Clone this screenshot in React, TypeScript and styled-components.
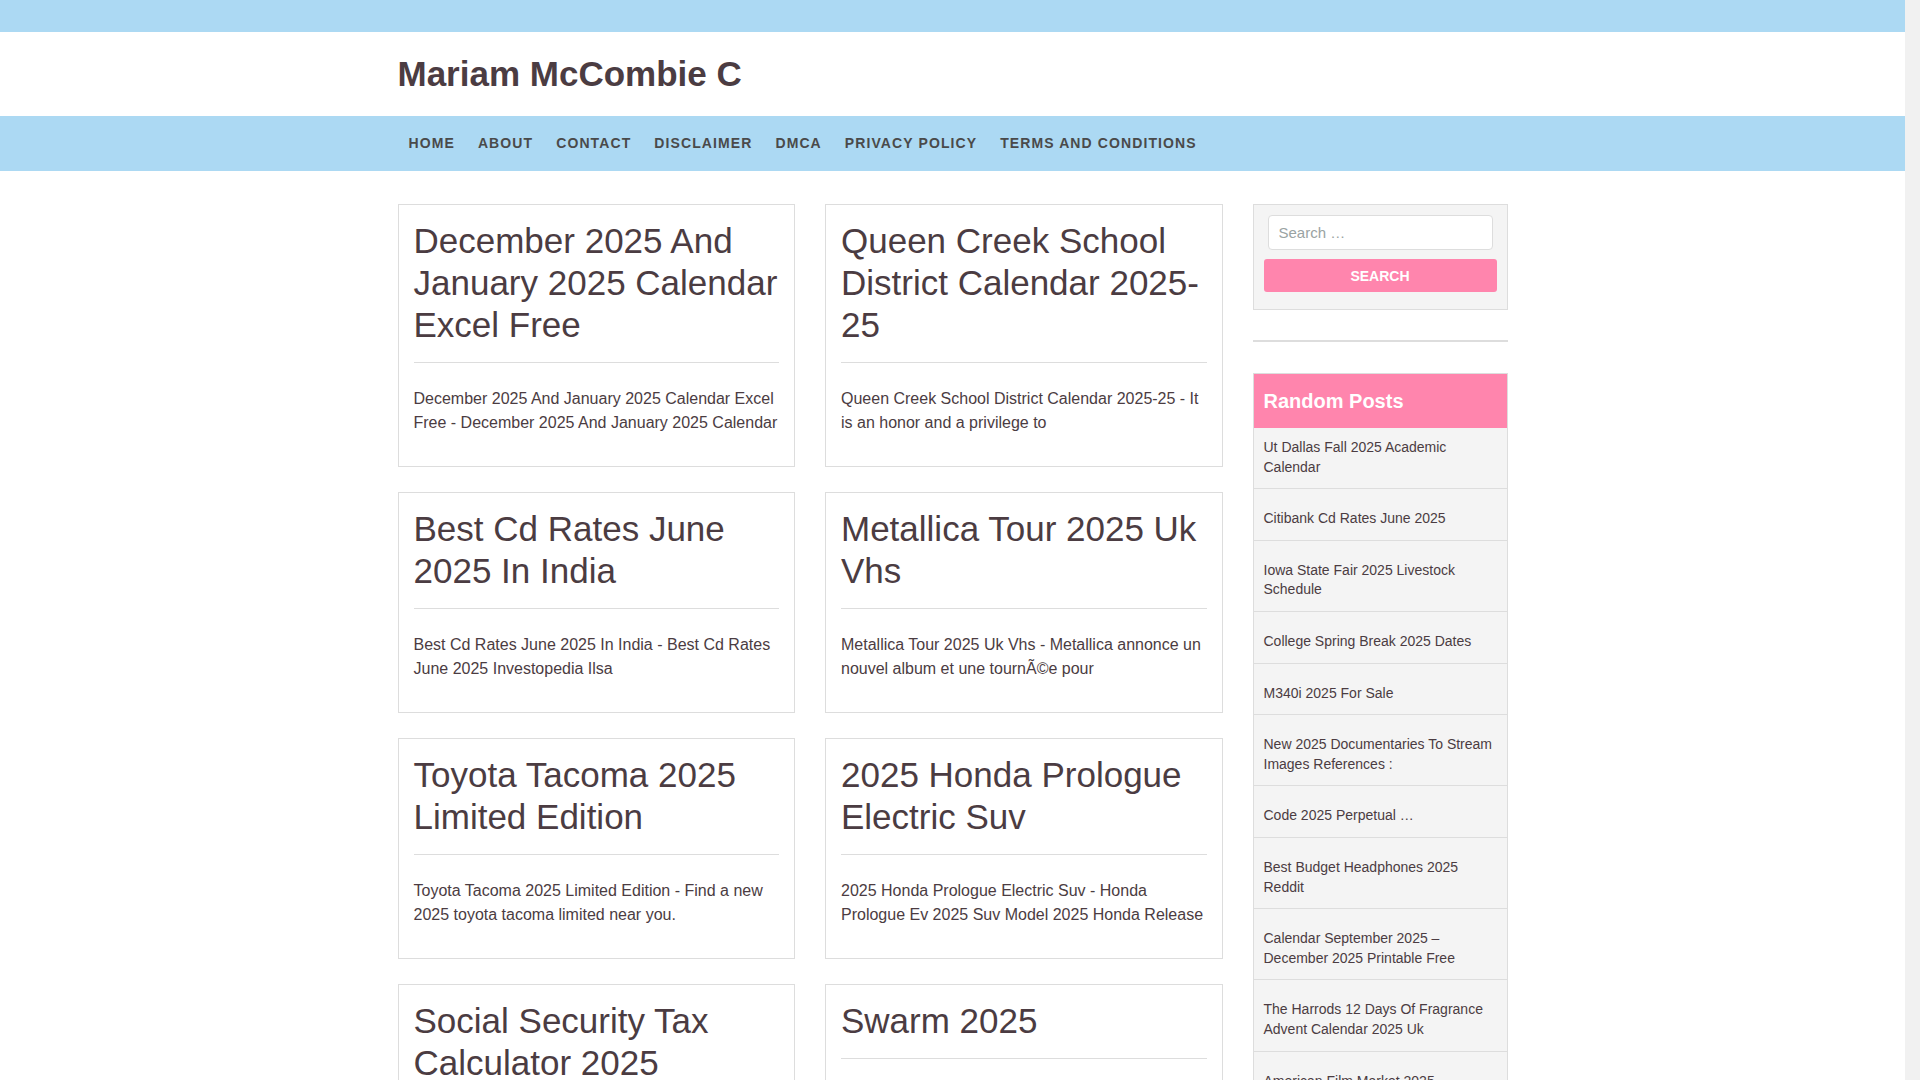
import styled, { createGlobalStyle } from 'styled-components';

const GlobalStyle = createGlobalStyle`
  html {
    background: #f1f1f1;
  }

  body {
    margin: 0 15px 0 0;
    background: #ffffff;
    color: #4b3c42;
    font-family: 'Liberation Sans', Arial, sans-serif;
  }

  * {
    box-sizing: border-box;
  }
`;

const skyBlue = '#acd9f3';
const pink = '#ff85ad';
const line = '#dddddd';
const panel = '#f4f4f4';

const TopBar = styled.div`
  height: 32px;
  background: ${skyBlue};
`;

const Container = styled.div`
  width: 1140px;
  margin: 0 auto;
  padding: 0 15px;
`;

const Header = styled.header`
  height: 84px;
  display: flex;
  align-items: center;
`;

const SiteTitle = styled.a`
  font-size: 35px;
  font-weight: 700;
  color: #4b3c42;
  text-decoration: none;
`;

const NavBar = styled.nav`
  background: ${skyBlue};
`;

const NavList = styled.ul`
  display: flex;
  margin: 0;
  padding: 0;
  list-style: none;
`;

const NavItem = styled.li`
  padding: 0 12px 0 11px;
  line-height: 55px;
  font-size: 14px;
  font-weight: 700;
  letter-spacing: 1.1px;
  text-transform: uppercase;
  color: #4a4a4a;
`;

const Layout = styled.div`
  display: grid;
  grid-template-columns: 825px 255px;
  column-gap: 30px;
  align-items: start;
  padding-top: 33px;
`;

const PostGrid = styled.main`
  display: grid;
  grid-template-columns: 1fr 1fr;
  column-gap: 30px;
  row-gap: 25px;
  align-items: start;
`;

const Card = styled.article`
  border: 1px solid ${line};
  padding: 15px;
`;

const CardTitle = styled.h2`
  margin: 0;
  font-size: 35px;
  line-height: 42px;
  font-weight: 400;
  color: #4b3c42;
`;

const Rule = styled.hr`
  margin: 16px 0 24px;
  border: 0;
  border-top: 1px solid ${line};
`;

const Excerpt = styled.p`
  margin: 0 0 16px;
  font-size: 16px;
  line-height: 24px;
  color: #4b3c42;
`;

const Sidebar = styled.aside`
  display: flex;
  flex-direction: column;
`;

const SearchBox = styled.form`
  display: flex;
  flex-direction: column;
  gap: 9px;
  padding: 10px 10px 17px;
  border: 1px solid ${line};
  background: ${panel};
`;

const SearchInput = styled.input`
  height: 35px;
  margin: 0 4px;
  padding: 0 10px;
  border: 1px solid ${line};
  border-radius: 4px;
  background: #ffffff;
  font-family: inherit;
  font-size: 15px;
  color: #4b3c42;

  &::placeholder {
    color: #9aa3a3;
  }
`;

const SearchButton = styled.button`
  height: 33px;
  border: 0;
  border-radius: 3px;
  background: ${pink};
  color: #ffffff;
  font-family: inherit;
  font-size: 14px;
  font-weight: 700;
  text-transform: uppercase;
`;

const Divider = styled.div`
  height: 2px;
  margin: 30px 0 31px;
  background: ${line};
`;

const Widget = styled.section`
  border: 1px solid ${line};
  background: ${panel};
`;

const WidgetTitle = styled.h3`
  margin: 0;
  height: 54px;
  padding: 0 10px;
  display: flex;
  align-items: center;
  background: ${pink};
  color: #ffffff;
  font-size: 20px;
  font-weight: 700;
`;

const PostList = styled.ul`
  margin: 0;
  padding: 0;
  list-style: none;
`;

const PostLink = styled.li`
  padding: 20px 10px 11px;
  border-bottom: 1px solid ${line};
  font-size: 14px;
  line-height: 19.6px;
  color: #4b3c42;

  &:first-child {
    padding-top: 10px;
  }
`;

const navLinks = ['Home', 'About', 'Contact', 'Disclaimer', 'DMCA', 'Privacy Policy', 'Terms and Conditions'];

const posts = [
  {
    title: 'December 2025 And January 2025 Calendar Excel Free',
    excerpt: 'December 2025 And January 2025 Calendar Excel Free - December 2025 And January 2025 Calendar',
  },
  {
    title: 'Queen Creek School District Calendar 2025-25',
    excerpt: 'Queen Creek School District Calendar 2025-25 - It is an honor and a privilege to',
  },
  {
    title: 'Best Cd Rates June 2025 In India',
    excerpt: 'Best Cd Rates June 2025 In India - Best Cd Rates June 2025 Investopedia Ilsa',
  },
  {
    title: 'Metallica Tour 2025 Uk Vhs',
    excerpt: 'Metallica Tour 2025 Uk Vhs - Metallica annonce un nouvel album et une tournÃ©e pour',
  },
  {
    title: 'Toyota Tacoma 2025 Limited Edition',
    excerpt: 'Toyota Tacoma 2025 Limited Edition - Find a new 2025 toyota tacoma limited near you.',
  },
  {
    title: '2025 Honda Prologue Electric Suv',
    excerpt: '2025 Honda Prologue Electric Suv - Honda Prologue Ev 2025 Suv Model 2025 Honda Release',
  },
  {
    title: 'Social Security Tax Calculator 2025',
    excerpt: 'Social Security Tax Calculator 2025 - Calculate your social security tax for the year',
  },
  {
    title: 'Swarm 2025',
    excerpt: 'Swarm 2025 - Watch the official trailer and release date details',
  },
];

const randomPosts = [
  'Ut Dallas Fall 2025 Academic Calendar',
  'Citibank Cd Rates June 2025',
  'Iowa State Fair 2025 Livestock Schedule',
  'College Spring Break 2025 Dates',
  'M340i 2025 For Sale',
  'New 2025 Documentaries To Stream Images References :',
  'Code 2025 Perpetual …',
  'Best Budget Headphones 2025 Reddit',
  'Calendar September 2025 – December 2025 Printable Free',
  'The Harrods 12 Days Of Fragrance Advent Calendar 2025 Uk',
  'American Film Market 2025',
];

export default function App() {
  return (
    <>
      <GlobalStyle />
      <TopBar />
      <Container>
        <Header>
          <SiteTitle href="#">Mariam McCombie C</SiteTitle>
        </Header>
      </Container>
      <NavBar>
        <Container>
          <NavList>
            {navLinks.map((link) => (
              <NavItem key={link}>{link}</NavItem>
            ))}
          </NavList>
        </Container>
      </NavBar>
      <Container>
        <Layout>
          <PostGrid>
            {posts.map((post) => (
              <Card key={post.title}>
                <CardTitle>{post.title}</CardTitle>
                <Rule />
                <Excerpt>{post.excerpt}</Excerpt>
              </Card>
            ))}
          </PostGrid>
          <Sidebar>
            <SearchBox onSubmit={(e) => e.preventDefault()}>
              <SearchInput type="search" placeholder="Search …" />
              <SearchButton type="submit">Search</SearchButton>
            </SearchBox>
            <Divider />
            <Widget>
              <WidgetTitle>Random Posts</WidgetTitle>
              <PostList>
                {randomPosts.map((p) => (
                  <PostLink key={p}>{p}</PostLink>
                ))}
              </PostList>
            </Widget>
          </Sidebar>
        </Layout>
      </Container>
    </>
  );
}
